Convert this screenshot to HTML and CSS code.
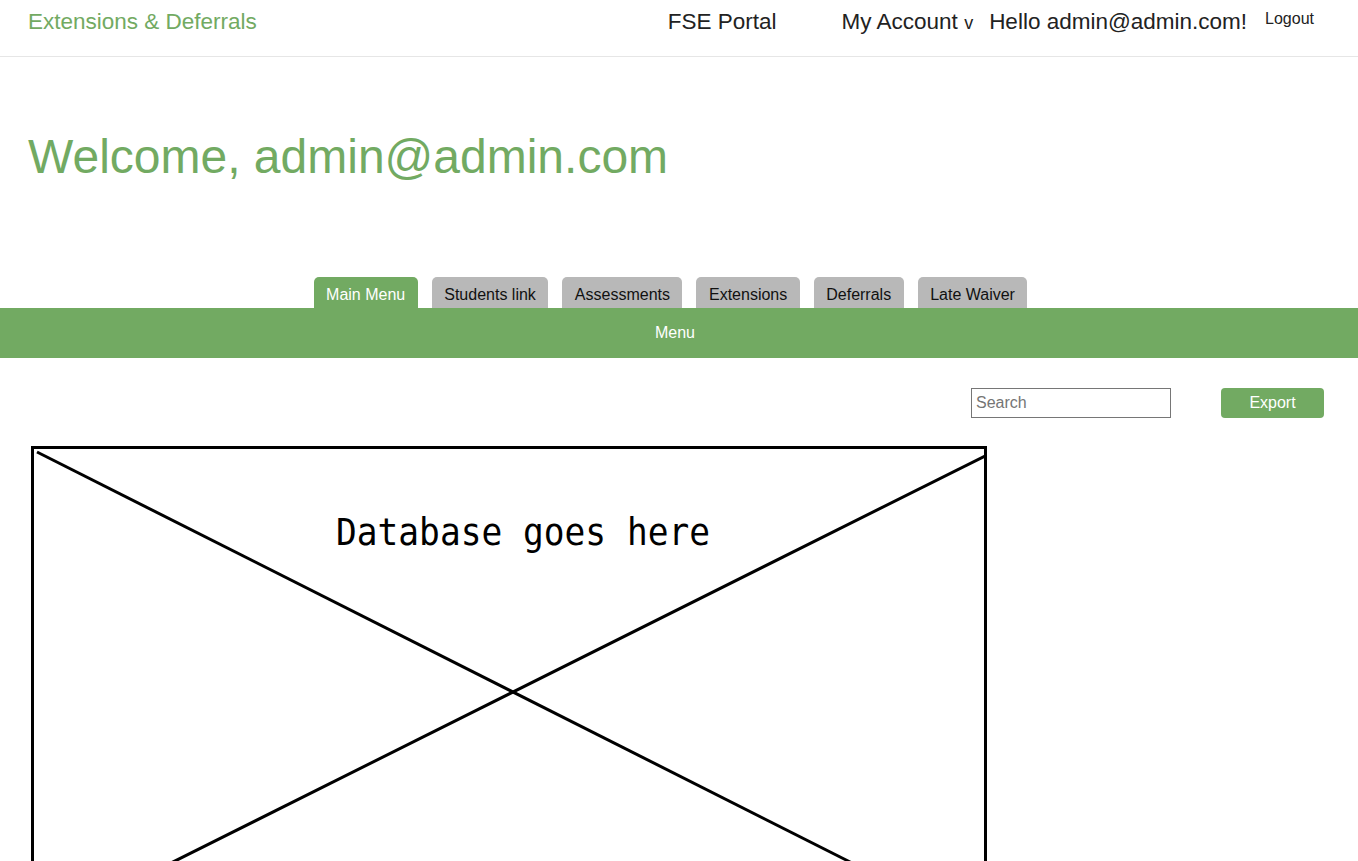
FILE: index.html
```html
<!DOCTYPE html>
<html lang="en">
<head>
<meta charset="utf-8">
<title>Extensions &amp; Deferrals</title>
<link rel="stylesheet" href="styles.css">
</head>
<body>
<header class="navbar">
  <a class="brand" href="#">Extensions &amp; Deferrals</a>
  <nav class="nav-right">
    <a class="nav-link portal" href="#">FSE Portal</a>
    <a class="nav-link account" href="#">My Account <span class="caret">v</span></a>
    <span class="nav-link hello">Hello admin@admin.com!</span>
    <a class="logout" href="#">Logout</a>
  </nav>
</header>

<main>
  <h1 class="welcome">Welcome, admin@admin.com</h1>

  <div class="tabs">
    <a class="tab active" href="#">Main Menu</a>
    <a class="tab" href="#">Students link</a>
    <a class="tab" href="#">Assessments</a>
    <a class="tab" href="#">Extensions</a>
    <a class="tab" href="#">Deferrals</a>
    <a class="tab" href="#">Late Waiver</a>
  </div>
  <div class="menu-bar">Menu</div>

  <div class="toolbar">
    <input class="search" type="text" placeholder="Search">
    <button class="export" type="button">Export</button>
  </div>

  <div class="db-box">
    <svg class="db-sketch" width="956" height="490" viewBox="0 0 956 490" xmlns="http://www.w3.org/2000/svg">
      <line x1="6" y1="6" x2="950" y2="482" stroke="#000" stroke-width="3"/>
      <line x1="956" y1="9" x2="0" y2="487" stroke="#000" stroke-width="3"/>
      <text x="305" y="99" font-family="DejaVu Sans Mono, Liberation Mono, monospace" font-size="37" textLength="374" lengthAdjust="spacingAndGlyphs" fill="#000">Database goes here</text>
    </svg>
  </div>
</main>
</body>
</html>
```
FILE: styles.css
```css
html, body {
  margin: 0;
  padding: 0;
  background: #fff;
}
body {
  font-family: "Liberation Sans", Arial, sans-serif;
  color: #222;
  overflow: hidden;
}
a {
  text-decoration: none;
  color: inherit;
}

.navbar {
  height: 56px;
  border-bottom: 1px solid #e6e6e6;
  display: flex;
  align-items: flex-start;
  padding: 0 44px 0 28px;
}
.brand {
  font-size: 22.5px;
  line-height: 22px;
  margin-top: 11px;
  color: #72aa62;
}
.nav-right {
  margin-left: auto;
  display: flex;
  align-items: flex-start;
}
.nav-link {
  font-size: 22.5px;
  line-height: 22px;
  margin-top: 11px;
  color: #222;
}
.portal { margin-right: 65px; }
.account { margin-right: 16px; }
.caret { font-size: 18px; }
.hello { margin-right: 18px; }
.logout {
  font-size: 16px;
  line-height: 16px;
  margin-top: 11px;
  color: #222;
}

.welcome {
  margin: 76px 0 0 28px;
  font-size: 48px;
  line-height: 48px;
  font-weight: normal;
  color: #72aa62;
}

.tabs {
  margin-top: 96px;
  display: flex;
  justify-content: center;
  gap: 14px;
  padding-right: 17px;
}
.tab {
  height: 31px;
  box-sizing: border-box;
  padding: 8px 12.5px 3px;
  font-size: 16px;
  line-height: 20px;
  background: #b8b8b8;
  color: #111;
  border-radius: 5px 5px 0 0;
}
.tab.active {
  background: #72aa62;
  color: #fff;
}
.menu-bar {
  height: 50px;
  background: #72aa62;
  color: #fff;
  font-size: 16px;
  line-height: 50px;
  text-align: center;
  padding-right: 8px;
}

.toolbar {
  margin-top: 30px;
  display: flex;
  justify-content: flex-end;
  gap: 50px;
  padding-right: 34px;
}
.search {
  width: 200px;
  height: 30px;
  box-sizing: border-box;
  border: 1px solid #767676;
  padding: 0 4px;
  font-family: "Liberation Sans", Arial, sans-serif;
  font-size: 16px;
  color: #222;
  margin: 0;
}
.search::placeholder {
  color: #757575;
}
.export {
  width: 103px;
  height: 30px;
  border: none;
  border-radius: 4px;
  background: #72aa62;
  color: #fff;
  font-family: "Liberation Sans", Arial, sans-serif;
  font-size: 16px;
  padding: 0;
  margin: 0;
}

.db-box {
  margin: 28px 0 0 31px;
  width: 956px;
  height: 490px;
  box-sizing: border-box;
  border: 3px solid #000;
  position: relative;
}
.db-sketch {
  position: absolute;
  left: -3px;
  top: -3px;
  display: block;
}
```
